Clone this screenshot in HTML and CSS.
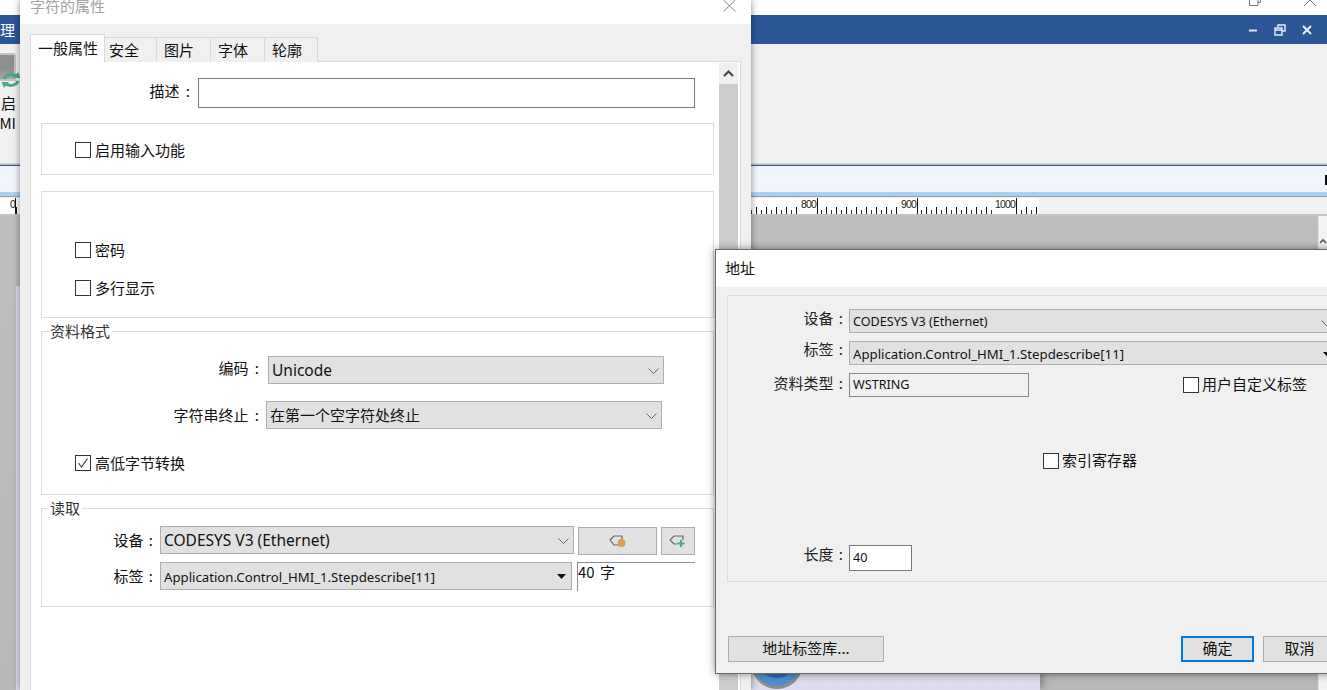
FILE: index.html
```html
<!DOCTYPE html>
<html lang="zh">
<head>
<meta charset="utf-8">
<title>字符的属性</title>
<link rel="stylesheet" href="styles.css">
</head>
<body>
<div class="app">
  <div class="app-top">
    <svg class="top-ico" width="14" height="7" viewBox="0 0 14 7"><path d="M1.5 0V5.5H10V0M10 2.5H12.5V0" fill="none" stroke="#777"/></svg>
    <svg class="top-ico top-x" width="14" height="7" viewBox="0 0 14 7"><path d="M1 6L7 0L13 6" fill="none" stroke="#777"/></svg>
  </div>
  <div class="titlebar">
    <span class="title-text">理</span>
    <div class="win-btns">
      <svg width="10" height="10" viewBox="0 0 10 10"><path d="M1 5.5H9" stroke="#dfe6f2" stroke-width="2"/></svg>
      <svg width="12" height="12" viewBox="0 0 12 12"><path d="M4 3V1H11V7H8M1 4H8V11H1Z M1 6H8" fill="none" stroke="#e6ecf6" stroke-width="1.4"/></svg>
      <svg width="10" height="10" viewBox="0 0 10 10"><path d="M1 1L9 9M9 1L1 9" stroke="#eef2f8" stroke-width="2"/></svg>
    </div>
  </div>
  <div class="ribbon">
    <div class="ribbon-item">
      <div class="ribbon-ico">
        <svg class="refresh" width="20" height="16" viewBox="0 0 20 16"><path d="M3 7A7.5 6 0 0 1 15 4M17 9A7.5 6 0 0 1 5 12" fill="none" stroke="#45ad80" stroke-width="3"/><path d="M12 6L19.5 6L17 0ZM8 10L0.5 10L3 16Z" fill="#45ad80"/></svg>
      </div>
      <span class="ribbon-l1">启</span>
      <span class="ribbon-l2">MI</span>
    </div>
  </div>
  <div class="strip"><span class="strip-mark"></span></div>
  <div class="ruler-bar">
    <div class="ruler">
      <span class="rl rl-0">0</span>
      <span class="rl rl-800">800</span>
      <span class="rl rl-900">900</span>
      <span class="rl rl-1000">1000</span>
    </div>
  </div>
  <div class="workspace">
    <div class="page">
      <svg class="page-logo" width="54" height="54" viewBox="0 0 54 54"><circle cx="27" cy="27" r="26" fill="#8d8d92"/><circle cx="27" cy="26" r="24" fill="#4f8fd0"/><circle cx="27" cy="22" r="20" fill="#2f6aa8"/></svg>
      <div class="page-dots"></div>
    </div>
    <div class="ws-scroll"><svg width="8" height="6" viewBox="0 0 8 6"><path d="M1 5L4 2L7 5" fill="none" stroke="#555" stroke-width="1.6"/></svg></div>
  </div>
</div>

<section class="dlg-a">
  <header class="dlg-a-title">
    <span>字符的属性</span>
    <svg width="13" height="12" viewBox="0 0 13 12"><path d="M0.5 0L12.5 11.5M12.5 0L0.5 11.5" stroke="#8c8c8c"/></svg>
  </header>
  <div class="dlg-a-body">
    <nav class="tabs">
      <span class="tab tab-on">一般属性</span>
      <span class="tab tab-2">安全</span>
      <span class="tab tab-3">图片</span>
      <span class="tab tab-3">字体</span>
      <span class="tab tab-3 tab-last">轮廓</span>
    </nav>
    <div class="panel">
      <div class="scroller">
        <div class="scroll-up"><svg width="11" height="7" viewBox="0 0 11 7"><path d="M1 6L5.5 1.5L10 6" fill="none" stroke="#444" stroke-width="2"/></svg></div>
      </div>
      <div class="form">
        <div class="row row-desc">
          <label class="lab lab-desc">描述 :</label>
          <div class="text-in desc-in"></div>
        </div>
        <div class="group g-input">
          <label class="chk"><i class="box"></i>启用输入功能</label>
        </div>
        <div class="group g-flags">
          <label class="chk chk-pass"><i class="box"></i>密码</label>
          <label class="chk chk-multi"><i class="box"></i>多行显示</label>
        </div>
        <div class="group g-format">
          <span class="legend">资料格式</span>
          <div class="row row-enc">
            <label class="lab lab-enc">编码 :</label>
            <div class="combo combo-big c-enc">Unicode<svg class="chev" width="11" height="6" viewBox="0 0 11 6"><path d="M0.5 0.5L5.5 5.5L10.5 0.5" fill="none" stroke="#666"/></svg></div>
          </div>
          <div class="row row-end">
            <label class="lab lab-end">字符串终止 :</label>
            <div class="combo combo-cjk c-end">在第一个空字符处终止<svg class="chev" width="11" height="6" viewBox="0 0 11 6"><path d="M0.5 0.5L5.5 5.5L10.5 0.5" fill="none" stroke="#666"/></svg></div>
          </div>
          <label class="chk chk-swap"><i class="box box-on"><svg width="14" height="14" viewBox="0 0 14 14"><path d="M2.5 7L5.5 11L11.5 2.5" fill="none" stroke="#444" stroke-width="1.2"/></svg></i>高低字节转换</label>
        </div>
        <div class="group g-read">
          <span class="legend">读取</span>
          <div class="row row-dev">
            <label class="lab lab-read">设备 :</label>
            <div class="combo combo-big c-dev">CODESYS V3 (Ethernet)<svg class="chev" width="11" height="6" viewBox="0 0 11 6"><path d="M0.5 0.5L5.5 5.5L10.5 0.5" fill="none" stroke="#666"/></svg></div>
            <button class="tag-btn tb-wide"><svg width="18" height="14" viewBox="0 0 18 14"><path d="M1 6L5 2H13V6M10 11H5L1 6" fill="none" stroke="#666" stroke-width="1.2"/><circle cx="12.5" cy="9" r="4" fill="#d99f55"/></svg></button>
            <button class="tag-btn tb-narrow"><svg width="18" height="14" viewBox="0 0 18 14"><path d="M1 6L5 2H14V6M8 10H5L1 6" fill="none" stroke="#666" stroke-width="1.2"/><path d="M12 6V13M8.5 9.5H15.5" stroke="#3fae7e" stroke-width="2"/></svg></button>
          </div>
          <div class="row row-tag">
            <label class="lab lab-read">标签 :</label>
            <div class="combo combo-mid c-tag">Application.Control_HMI_1.Stepdescribe[11]<svg class="caret" width="9" height="5" viewBox="0 0 9 5"><path d="M0 0H9L4.5 5Z" fill="#111"/></svg></div>
            <div class="len-box">40 字</div>
          </div>
        </div>
      </div>
    </div>
  </div>
</section>

<section class="dlg-b">
  <header class="dlg-b-title">地址</header>
  <div class="dlg-b-body">
    <div class="b-group">
      <div class="b-row b-r1">
        <label class="b-lab">设备 :</label>
        <div class="combo b-combo b-small">CODESYS V3 (Ethernet)<svg class="chev-b" width="11" height="6" viewBox="0 0 11 6"><path d="M0.5 0.5L5.5 5.5L10.5 0.5" fill="none" stroke="#666"/></svg></div>
      </div>
      <div class="b-row b-r2">
        <label class="b-lab">标签 :</label>
        <div class="combo b-combo">Application.Control_HMI_1.Stepdescribe[11]<svg class="caret-b" width="9" height="5" viewBox="0 0 9 5"><path d="M0 0H9L4.5 5Z" fill="#111"/></svg></div>
      </div>
      <div class="b-row b-r3">
        <label class="b-lab">资料类型 :</label>
        <div class="type-box">WSTRING</div>
        <label class="chk chk-user"><i class="box"></i>用户自定义标签</label>
      </div>
      <label class="chk chk-index"><i class="box"></i>索引寄存器</label>
      <div class="b-row b-r5">
        <label class="b-lab">长度 :</label>
        <div class="len-in">40</div>
      </div>
    </div>
    <footer class="b-foot">
      <button class="btn btn-lib">地址标签库...</button>
      <button class="btn btn-ok">确定</button>
      <button class="btn btn-no">取消</button>
    </footer>
  </div>
</section>
</body>
</html>
```

FILE: styles.css
```css
html, body {
  margin: 0;
  width: 1327px;
  height: 690px;
  overflow: hidden;
}
body {
  position: relative;
  background: #bebebe;
  color: #111;
  font: 15px/20px "Noto Sans CJK SC", "Noto Sans", sans-serif;
}
button { font: inherit; color: inherit; padding: 0; }
label { display: block; }

/* background application */
.app { display: flex; flex-direction: column; height: 690px; }
.app-top {
  height: 15px;
  background: #fff;
  display: flex;
  justify-content: flex-end;
  align-items: flex-start;
  padding-right: 10px;
  box-sizing: border-box;
}
.top-ico { margin-right: 41px; }
.top-x { margin-right: 0; margin-left: 0; }
.titlebar {
  height: 29px;
  background: #2b5797;
  color: #fff;
  display: flex;
  align-items: center;
  justify-content: space-between;
  padding: 0 15px 0 0;
  flex: none;
}
.title-text { font-size: 15px; width: 20px; }
.win-btns { display: flex; align-items: center; gap: 16px; }
.ribbon {
  height: 119px;
  background: #f0f0f0;
  border-bottom: 1px solid #d8d8d8;
  flex: none;
}
.ribbon-item { display: flex; flex-direction: column; width: 16px; padding-top: 9px; align-items: flex-end; }
.ribbon-ico {
  position: relative;
  width: 16px;
  height: 28px;
  box-sizing: border-box;
  border: 2px solid #c2c2c2;
  border-left: 0;
  border-radius: 0 3px 0 0;
  background: linear-gradient(#8e8e8e 60%, #a5a5a5);
}
.refresh { position: absolute; left: 1px; top: 17px; }
.ribbon-l1 { margin-top: 12px; line-height: 20px; }
.ribbon-l2 { line-height: 20px; white-space: nowrap; }
.strip {
  height: 26px;
  flex: none;
  border-top: 1px solid #2b5797;
  border-bottom: 4px solid #a9d1f2;
  background: #f1f5fd;
  margin-top: 1px;
  position: relative;
}
.strip-mark { position: absolute; right: 0; top: 9px; width: 2px; height: 10px; background: #111; }
.ruler-bar {
  height: 20px;
  flex: none;
  box-sizing: border-box;
  border-top: 1px solid #9c9c9c;
  border-bottom: 2px solid #c4c4c4;
  background: #f0f0f0;
  padding-top: 1px;
}
.ruler {
  position: relative;
  width: 1039px;
  height: 16px;
  background-color: #fff;
  background-image:
    repeating-linear-gradient(90deg, #111 0 1px, transparent 1px 10px),
    repeating-linear-gradient(90deg, #333 0 1px, transparent 1px 5px);
  background-size: 1021px 7px, 1021px 4px;
  background-position: 16px 100%, 16px 100%;
  background-repeat: no-repeat;
}
.rl {
  position: absolute;
  top: 0;
  height: 16px;
  font: 10.5px/13px "Liberation Sans", sans-serif;
  letter-spacing: -0.8px;
  color: #222;
  background: #fff;
  border-right: 1px solid #111;
  padding-right: 1px;
}
.rl-0 { left: 10px; padding-right: 0; }
.rl-800 { left: 801px; }
.rl-900 { left: 901px; }
.rl-1000 { left: 995px; }
.workspace {
  flex: 1;
  position: relative;
  background: linear-gradient(#bebebe, #b8b8b8);
}
.page {
  position: absolute;
  left: 16px;
  top: 70px;
  width: 1024px;
  height: 404px;
  background: #dcdcec;
  box-shadow: 6px 0 6px -2px #8f8f8f;
  overflow: hidden;
}
.page-logo { position: absolute; left: 734px; top: 350px; }
.page-dots {
  position: absolute;
  left: 790px;
  right: 0;
  bottom: 4px;
  height: 1px;
  background: repeating-linear-gradient(90deg, #f4f4fa 0 1px, transparent 1px 18px);
}
.ws-scroll {
  position: absolute;
  right: 0;
  top: 0;
  bottom: 0;
  width: 9px;
  background: #f3f3f3;
  border-left: 1px solid #e4e4e4;
  padding-top: 12px;
  box-sizing: border-box;
}

/* property dialog */
.dlg-a {
  position: absolute;
  left: 20px;
  top: 0;
  width: 731px;
  height: 690px;
  display: flex;
  flex-direction: column;
  background: #f0f0f0;
  box-shadow: 0 0 7px rgba(0, 0, 0, .45);
}
.dlg-a-title {
  height: 24px;
  flex: none;
  background: #fff;
  color: #a3a3a3;
  display: flex;
  justify-content: space-between;
  padding: 0 15px 0 10px;
  line-height: 11px;
  overflow: hidden;
}
.dlg-a-body { flex: 1; padding: 10px 10px 0; display: flex; flex-direction: column; }
.tabs { display: flex; align-items: flex-end; height: 28px; flex: none; position: relative; z-index: 1; }
.tab {
  height: 25px;
  box-sizing: border-box;
  border: 1px solid #dadada;
  border-width: 1px 1px 0 0;
  line-height: 23px;
  background: #f0f0f0;
}
.tab-on {
  width: 75px;
  height: 28px;
  background: #fff;
  border: 1px solid #dadada;
  border-bottom: 0;
  padding-left: 7px;
  line-height: 25px;
}
.tab-2 { width: 52px; padding-left: 4px; }
.tab-3 { width: 54px; padding-left: 7px; }
.tab-last { width: 53px; }
.panel {
  flex: 1;
  position: relative;
  box-sizing: border-box;
  margin-top: -1px;
  width: 711px;
  background: #fff;
  border: 1px solid #dadada;
  border-bottom: 0;
}
.scroller {
  position: absolute;
  right: 2px;
  top: 1px;
  bottom: 0;
  width: 19px;
  background: #cdcdcd;
}
.scroll-up {
  height: 21px;
  background: #f0f0f0;
  display: flex;
  align-items: center;
  justify-content: center;
}
.form { padding: 16px 0 0 10px; width: 673px; }
.row { display: flex; align-items: flex-start; }
.lab { text-align: right; flex: none; white-space: nowrap; line-height: 24px; word-spacing: 3px; }
.row-desc { height: 30px; }
.lab-desc { width: 149px; line-height: 26px; }
.text-in {
  box-sizing: border-box;
  background: #fff;
  border: 1px solid #7a7a7a;
}
.desc-in { width: 497px; height: 30px; margin-left: 8px; }
.group {
  position: relative;
  box-sizing: border-box;
  border: 1px solid #dcdcdc;
}
.legend {
  position: absolute;
  left: 7px;
  top: -11px;
  padding: 0 2px 0 1px;
  background: #fff;
  color: #333;
}
.g-input { margin-top: 15px; height: 52px; padding: 18px 0 0 33px; }
.g-flags { margin-top: 16px; height: 127px; padding: 50px 0 0 33px; }
.g-format { margin-top: 13px; height: 164px; padding-top: 24px; }
.g-read { margin-top: 13px; height: 99px; padding-top: 17px; }
.chk {
  display: flex;
  align-items: flex-start;
  gap: 4px;
  height: 16px;
  line-height: 16px;
  white-space: nowrap;
}
.box {
  width: 16px;
  height: 16px;
  box-sizing: border-box;
  border: 1px solid #333;
  background: #fff;
  flex: none;
  display: flex;
  align-items: center;
  justify-content: center;
}
.chk-multi { margin-top: 22px; }
.combo {
  box-sizing: border-box;
  background: #e1e1e1;
  border: 1px solid #adadad;
  position: relative;
  white-space: nowrap;
  padding-left: 3px;
  font-family: "Noto Sans", sans-serif;
}
.combo-big { height: 28px; font-size: 15.5px; line-height: 26px; }
.combo-cjk { height: 28px; line-height: 26px; font-family: "Noto Sans CJK SC", sans-serif; }
.combo-mid { height: 28px; font-size: 13.2px; line-height: 28px; }
.chev { position: absolute; right: 4px; top: 11px; }
.caret { position: absolute; right: 5px; top: 11px; }
.lab-enc { width: 217px; }
.c-enc { width: 396px; margin-left: 9px; }
.row-end { margin-top: 17px; }
.lab-end { width: 217px; line-height: 28px; }
.c-end { width: 396px; margin-left: 7px; }
.chk-swap { margin: 26px 0 0 33px; }
.lab-read { width: 111px; line-height: 27px; word-spacing: 2px; }
.c-dev { width: 414px; margin-left: 7px; }
.tag-btn {
  box-sizing: border-box;
  height: 28px;
  margin-top: 1px;
  background: #e1e1e1;
  border: 1px solid #adadad;
  display: flex;
  align-items: center;
  justify-content: center;
}
.tb-wide { width: 79px; margin-left: 4px; }
.tb-narrow { width: 34px; margin-left: 4px; }
.row-tag { margin-top: 7px; }
.c-tag { width: 412px; margin-left: 7px; }
.len-box {
  box-sizing: border-box;
  width: 118px;
  height: 29px;
  margin-left: 5px;
  border-top: 1px solid #8e8e8e;
  border-left: 1px solid #8e8e8e;
  line-height: 18px;
  word-spacing: 2px;
}

/* address dialog */
.dlg-b {
  position: absolute;
  left: 715px;
  top: 249px;
  width: 700px;
  height: 425px;
  box-sizing: border-box;
  border: 1px solid #6a6a6a;
  background: #f0f0f0;
  box-shadow: 0 0 8px rgba(0, 0, 0, .45);
}
.dlg-b .chk { line-height: 14px; gap: 3px; }
.dlg-b-title {
  height: 37px;
  background: #fff;
  line-height: 36px;
  padding-left: 9px;
}
.dlg-b-body { padding: 8px 0 0 11px; }
.b-group {
  box-sizing: border-box;
  height: 287px;
  border: 1px solid #dcdcdc;
  padding-top: 13px;
}
.b-row { display: flex; align-items: flex-start; }
.b-lab {
  width: 115px;
  flex: none;
  text-align: right;
  line-height: 17px;
  word-spacing: 2px;
  color: #222;
}
.b-r2 .b-lab { line-height: 15px; }
.b-r3 .b-lab { line-height: 19px; }
.b-combo {
  width: 560px;
  height: 24px;
  margin-left: 6px;
  font-size: 13.2px;
  line-height: 24px;
}
.b-small { font-size: 12.6px; }
.chev-b { position: absolute; left: 471px; top: 10px; }
.caret-b { position: absolute; left: 473px; top: 10px; }
.b-r2, .b-r3 { margin-top: 8px; }
.type-box {
  box-sizing: border-box;
  width: 180px;
  height: 24px;
  margin-left: 6px;
  border: 1px solid #8a8a8a;
  padding-left: 3px;
  font: 12.6px/22px "Noto Sans", sans-serif;
}
.chk-user { margin: 4px 0 0 154px; gap: 4px; }
.chk-index { margin: 56px 0 0 315px; }
.b-r5 { margin-top: 76px; }
.len-in {
  box-sizing: border-box;
  width: 63px;
  height: 26px;
  margin-left: 6px;
  background: #fff;
  border: 1px solid #7a7a7a;
  padding-left: 3px;
  font: 12.6px/23px "Noto Sans", sans-serif;
}
.b-foot { display: flex; margin-top: 54px; padding-left: 1px; }
.btn {
  box-sizing: border-box;
  height: 26px;
  background: #e1e1e1;
  border: 1px solid #adadad;
  flex: none;
  padding-bottom: 2px;
  line-height: 20px;
}
.btn-lib { width: 156px; }
.btn-ok { width: 73px; margin-left: 297px; border: 2px solid #0078d7; }
.btn-no { width: 73px; margin-left: 9px; }
```
